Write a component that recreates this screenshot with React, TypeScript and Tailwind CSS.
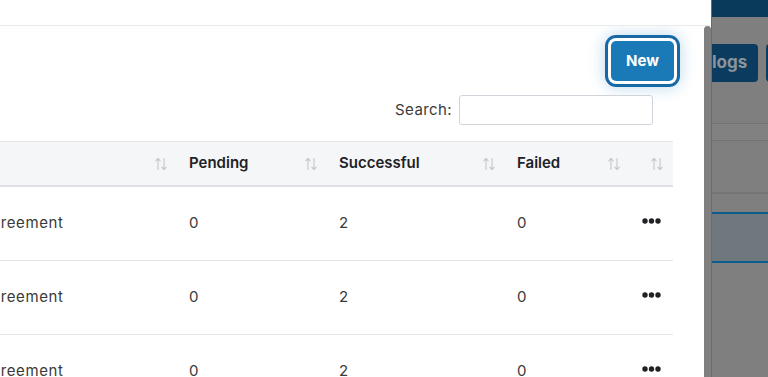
import React from "react";

const SortIcon = () => (
  <svg width="14" height="14" viewBox="0 0 14 14" fill="none" stroke="#c3c7cc" strokeWidth="1.1" strokeLinecap="round" strokeLinejoin="round">
    <path d="M4 12.5V1.5M1.8 3.8L4 1.5L6.2 3.8" />
    <path d="M10 1.5V12.5M7.8 10.2L10 12.5L12.2 10.2" />
  </svg>
);

const Dots = () => (
  <svg width="19" height="6" viewBox="0 0 19 6" fill="#1f2125">
    <circle cx="3" cy="3" r="2.7" />
    <circle cx="9.5" cy="3" r="2.7" />
    <circle cx="16" cy="3" r="2.7" />
  </svg>
);

const cols = "grid grid-cols-[209px_150px_178px_127px_43px]";

const rows = [
  { name: "Agreement", pending: "0", success: "2", failed: "0" },
  { name: "Agreement", pending: "0", success: "2", failed: "0" },
  { name: "Agreement", pending: "0", success: "2", failed: "0" },
];

export default function App() {
  return (
    <div className="w-[768px] h-[377px] overflow-hidden flex bg-[#7f7f7f] font-['Inter',sans-serif]">
      {/* Modal panel */}
      <div className="w-[711px] shrink-0 bg-white flex flex-col">
        <div className="h-[26px] shrink-0 border-b border-[#e9e9e9]" />
        <div className="flex flex-1 min-h-0">
          <div className="flex-1 min-w-0 overflow-hidden pr-[30px] flex flex-col">
            <div className="flex justify-end pt-[15px]">
              <button className="h-10 w-[63px] rounded-[5px] bg-[#1a7ab8] text-white text-[15px] font-bold ring-3 ring-[#1769a6] ring-offset-3 ring-offset-white shadow-[0_0_16px_6px_rgba(26,122,184,0.3)]">
                New
              </button>
            </div>
            <div className="flex justify-end items-center gap-[7px] mt-[14px] pr-[21px]">
              <span className="text-[15px] text-[#3b3b3b] tracking-[0.4px]">Search:</span>
              <div className="w-[194px] h-[30px] rounded-[3px] border border-[#ced4da] bg-white" />
            </div>
            <div className="mt-[16px] overflow-hidden">
              <div className="-ml-[34px] w-[707px]">
                <div className={`${cols} h-[46px] bg-[#f5f6f8] border-t border-[#e4e6e9] border-b-2 border-b-[#dfe1e5] text-[15px] font-semibold text-[#1e2125]`}>
                  <div className="flex items-center justify-end pr-[7px]"><SortIcon /></div>
                  <div className="flex items-center justify-between pl-[14px] pr-[7px]"><span>Pending</span><SortIcon /></div>
                  <div className="flex items-center justify-between pl-[14px] pr-[7px]"><span>Successful</span><SortIcon /></div>
                  <div className="flex items-center justify-between pl-[14px] pr-[9px]"><span>Failed</span><SortIcon /></div>
                  <div className="flex items-center justify-end pr-[9px]"><SortIcon /></div>
                </div>
                {rows.map((r, i) => (
                  <div key={i} className={`${cols} h-[74px] border-b border-[#e2e4e7] text-[15px] text-[#3a3a3a] tracking-[0.6px]`}>
                    <div className="flex items-center pl-[14px]">{r.name}</div>
                    <div className="flex items-center pl-[14px]">{r.pending}</div>
                    <div className="flex items-center pl-[14px]">{r.success}</div>
                    <div className="flex items-center pl-[14px]">{r.failed}</div>
                    <div className="flex items-center justify-end pr-[12px] pb-[5px]"><Dots /></div>
                  </div>
                ))}
              </div>
            </div>
          </div>
          {/* scrollbar */}
          <div className="w-[7px] shrink-0 bg-[#7f7f7f] rounded-t-[4px]" />
        </div>
      </div>
      {/* Overlay background */}
      <div className="flex-1 flex flex-col border-l border-[#6c6c6c] overflow-hidden">
        <div className="h-[17px] shrink-0 bg-[#0a3a5b]" />
        <div className="h-[27px] shrink-0" />
        <div className="flex gap-[8px] -ml-[6px] h-[38px] shrink-0">
          <div className="w-[52px] shrink-0 rounded-r-[4px] bg-[#0b3b5e] flex items-center pl-[6px] text-[17px] font-bold text-[#8c939b]">logs</div>
          <div className="w-[20px] shrink-0 rounded-l-[4px] bg-[#0b3b5e]" />
        </div>
        <div className="h-[42px] shrink-0 border-b border-[#727272]" />
        <div className="h-[17px] shrink-0 bg-[#818181] border-b border-[#727272]" />
        <div className="h-[53px] shrink-0 border-b-2 border-[#747676]" />
        <div className="h-[20px] shrink-0 border-b-2 border-[#0c5d8e]" />
        <div className="h-[49px] shrink-0 bg-[#6f787c] border-b-2 border-[#0c5d8e]" />
        <div className="flex-1" />
      </div>
    </div>
  );
}
